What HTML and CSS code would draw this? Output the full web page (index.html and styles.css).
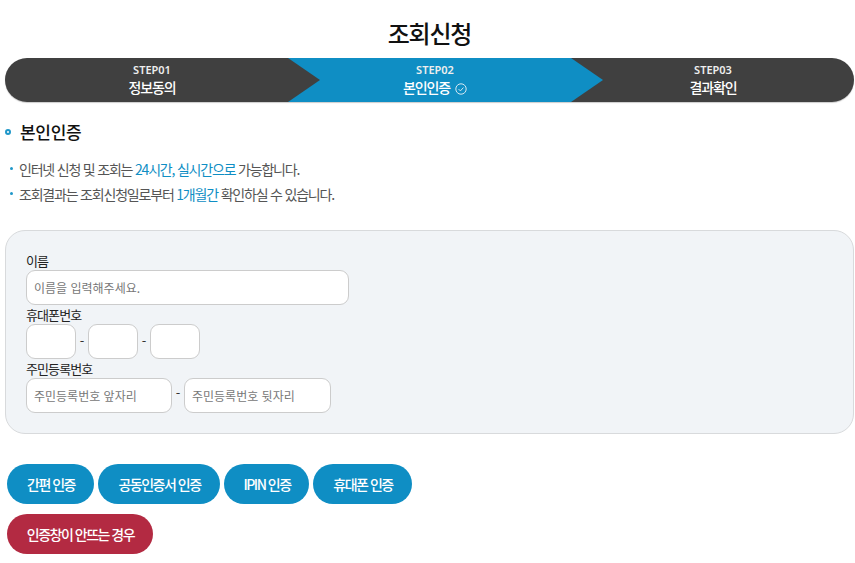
FILE: index.html
```html
<!DOCTYPE html>
<html lang="ko">
<head>
    <meta charset="UTF-8">
    <title>조회신청</title>
    <link rel="stylesheet" href="styles.css">
</head>
<body>
    <h1 class="page-title">조회신청</h1>

    <ol class="steps">
        <li class="step step-first">
            <span class="step-num">STEP01</span>
            <span class="step-name">정보동의</span>
        </li>
        <li class="step step-active">
            <span class="step-num">STEP02</span>
            <span class="step-name">본인인증
                <svg class="step-check" viewBox="0 0 12 12" width="12" height="12">
                    <circle cx="6" cy="6" r="5.2" fill="none" stroke="currentColor" stroke-width="1"/>
                    <path d="M3.6 6.1l1.8 1.8 3-3.3" fill="none" stroke="currentColor" stroke-width="1"/>
                </svg>
            </span>
        </li>
        <li class="step step-last">
            <span class="step-num">STEP03</span>
            <span class="step-name">결과확인</span>
        </li>
    </ol>

    <h2 class="section-title">본인인증</h2>

    <ul class="notice">
        <li>인터넷 신청 및 조회는 <em>24시간, 실시간으로</em> 가능합니다.</li>
        <li>조회결과는 조회신청일로부터 <em>1개월간</em> 확인하실 수 있습니다.</li>
    </ul>

    <form class="auth-form">
        <label class="field-label">이름</label>
        <div class="field-row">
            <input class="input input-name" type="text" placeholder="이름을 입력해주세요.">
        </div>
        <label class="field-label">휴대폰번호</label>
        <div class="field-row">
            <input class="input input-phone" type="text">
            <span class="dash">-</span>
            <input class="input input-phone" type="text">
            <span class="dash">-</span>
            <input class="input input-phone" type="text">
        </div>
        <label class="field-label">주민등록번호</label>
        <div class="field-row">
            <input class="input input-rrn" type="text" placeholder="주민등록번호 앞자리">
            <span class="dash dash-high">-</span>
            <input class="input input-rrn input-rrn-back" type="text" placeholder="주민등록번호 뒷자리">
        </div>
    </form>

    <div class="btn-row">
        <button class="btn btn-blue btn-simple">간편 인증</button>
        <button class="btn btn-blue btn-cert">공동인증서 인증</button>
        <button class="btn btn-blue btn-ipin">IPIN 인증</button>
        <button class="btn btn-blue btn-phone">휴대폰 인증</button>
    </div>
    <div class="btn-row">
        <button class="btn btn-red">인증창이 안뜨는 경우</button>
    </div>
</body>
</html>
```

FILE: styles.css
```css
* {
    box-sizing: border-box;
}
body {
    margin: 0;
    padding: 0 1px 0 5px;
    background-color: #fff;
    color: #333;
    font-family: "Noto Sans CJK KR", "Noto Sans", sans-serif;
    font-size: 14px;
}

/* title */
.page-title {
    margin: 0;
    padding-top: 16px;
    height: 58px;
    text-align: center;
    color: #111;
    font-size: 24px;
    line-height: 34px;
    font-weight: 500;
    letter-spacing: -1.2px;
}

/* step bar */
.steps {
    display: grid;
    grid-template-columns: repeat(3, 1fr);
    margin: 0;
    padding: 0;
    list-style: none;
    height: 44px;
    border-radius: 22px;
    background-color: #404040;
    box-shadow: 0 1px 1px #ccc;
    color: #fff;
}
.step {
    position: relative;
    display: flex;
    flex-direction: column;
    align-items: center;
    padding-top: 5px;
    padding-left: 11px;
}
.step-last {
    padding-left: 1px;
}
.step-num {
    font-family: "Noto Sans", sans-serif;
    font-size: 11px;
    line-height: 14px;
    font-weight: 600;
    color: #eee;
}
.step-name {
    font-size: 14px;
    line-height: 20px;
    font-weight: 500;
    letter-spacing: -1.1px;
}
.step-check {
    margin-left: 2px;
    vertical-align: -2px;
    color: #d5e8f2;
}
.step-active {
    background-color: #0f8ec4;
}
.step-first::after,
.step-active::after {
    content: "";
    position: absolute;
    top: 0;
    left: 100%;
    z-index: 1;
    border-style: solid;
    border-width: 22px 0 22px 32px;
    border-color: transparent transparent transparent #404040;
}
.step-active::after {
    border-left-color: #0f8ec4;
}

/* section */
.section-title {
    position: relative;
    margin: 18px 0 0;
    padding-left: 15px;
    color: #111;
    font-size: 17px;
    line-height: 24px;
    font-weight: 500;
    letter-spacing: -0.3px;
}
.section-title::before {
    content: "";
    position: absolute;
    left: 0;
    top: 9px;
    width: 2px;
    height: 2px;
    border: 2px solid #1f97c9;
    border-radius: 50%;
}
.notice {
    margin: 13px 0 0;
    padding: 0 0 0 14px;
    list-style: none;
    color: #555;
    font-size: 14px;
    line-height: 25px;
    letter-spacing: -1.2px;
}
.notice li {
    position: relative;
}
.notice li::before {
    content: "";
    position: absolute;
    left: -9px;
    top: 10px;
    width: 3px;
    height: 3px;
    border-radius: 50%;
    background-color: #1f97c9;
}
.notice em {
    font-style: normal;
    color: #0f8ec4;
}

/* form box */
.auth-form {
    margin-top: 23px;
    height: 204px;
    padding: 20px 20px;
    border: 1px solid #d8dadc;
    border-radius: 20px;
    background-color: #f1f4f7;
}
.field-label {
    display: block;
    height: 19px;
    color: #222;
    font-size: 13px;
    line-height: 19px;
    letter-spacing: -0.9px;
}
.field-row {
    display: flex;
    align-items: center;
}
.input {
    height: 35px;
    padding: 0 7px;
    border: 1px solid #ccc;
    border-radius: 9px;
    background-color: #fff;
    font-family: inherit;
    font-size: 12px;
}
.input::placeholder {
    color: #777;
}
.input-name {
    width: 323px;
}
.input-phone {
    width: 50px;
}
.input-rrn {
    width: 146px;
}
.input-rrn-back {
    width: 147px;
}
.dash {
    width: 12px;
    padding-bottom: 3px;
    text-align: center;
    color: #333;
    font-size: 13px;
}
.dash-high {
    padding-bottom: 6px;
}

/* buttons */
.btn-row {
    display: flex;
    gap: 4px;
    margin-top: 10px;
    padding-left: 2px;
}
.auth-form + .btn-row {
    margin-top: 30px;
}
.btn {
    height: 40px;
    padding: 0 0 0 1px;
    border: 0;
    border-radius: 20px;
    color: #fff;
    font-family: inherit;
    font-size: 14px;
    font-weight: 500;
    letter-spacing: -1.5px;
}
.btn-blue {
    background-color: #0f8ec4;
}
.btn-red {
    width: 146px;
    background-color: #b32a42;
}
.btn-simple {
    width: 87px;
}
.btn-cert {
    width: 122px;
}
.btn-ipin {
    width: 85px;
}
.btn-phone {
    width: 99px;
}
```
